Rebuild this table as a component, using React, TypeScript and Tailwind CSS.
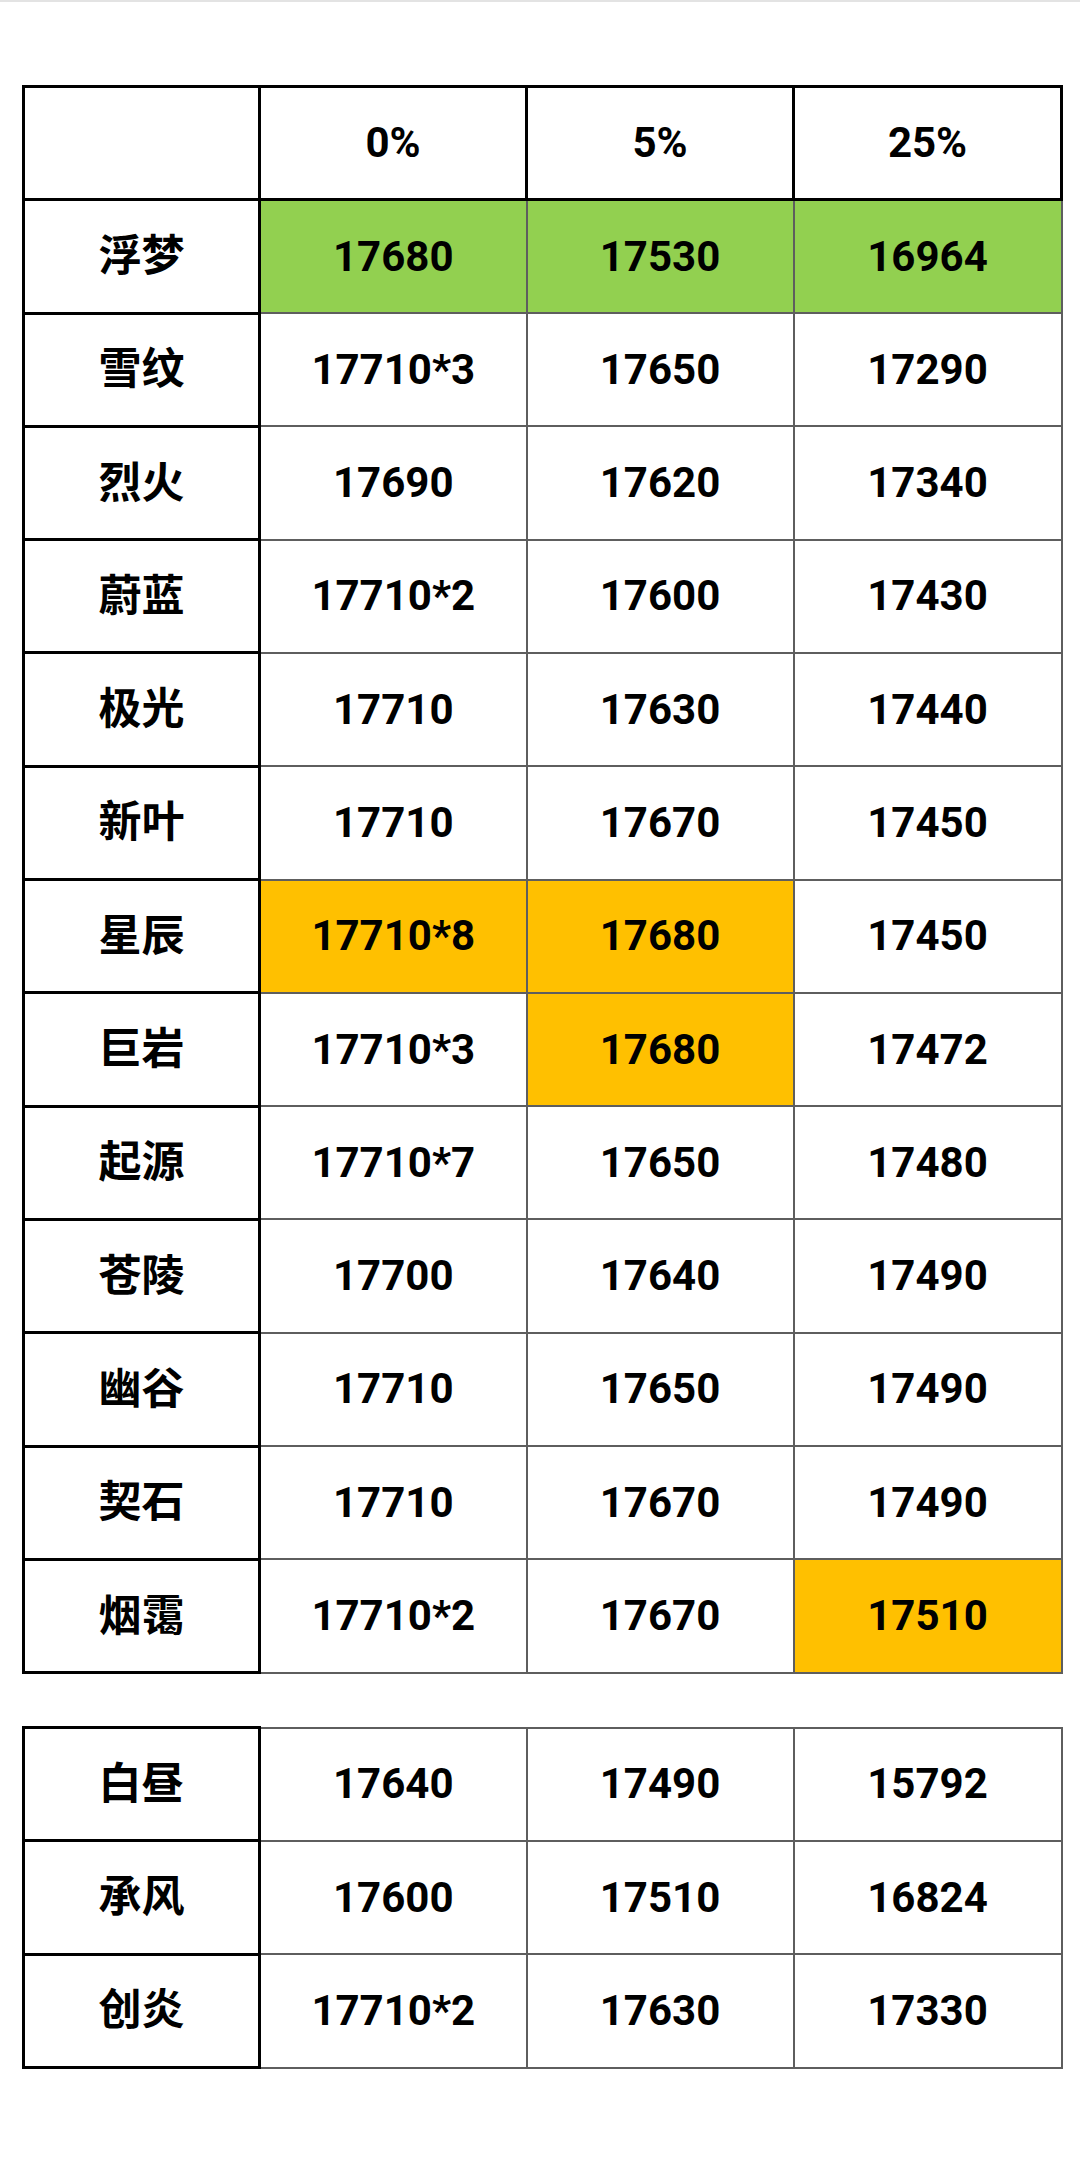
import React from 'react';

type Cell = { v: string; hl?: 'green' | 'orange' };
type Row = { name: string; cells: Cell[] };

const g = (v: string): Cell => ({ v, hl: 'green' });
const o = (v: string): Cell => ({ v, hl: 'orange' });
const n = (v: string): Cell => ({ v });

const mainRows: Row[] = [
  { name: '浮梦', cells: [g('17680'), g('17530'), g('16964')] },
  { name: '雪纹', cells: [n('17710*3'), n('17650'), n('17290')] },
  { name: '烈火', cells: [n('17690'), n('17620'), n('17340')] },
  { name: '蔚蓝', cells: [n('17710*2'), n('17600'), n('17430')] },
  { name: '极光', cells: [n('17710'), n('17630'), n('17440')] },
  { name: '新叶', cells: [n('17710'), n('17670'), n('17450')] },
  { name: '星辰', cells: [o('17710*8'), o('17680'), n('17450')] },
  { name: '巨岩', cells: [n('17710*3'), o('17680'), n('17472')] },
  { name: '起源', cells: [n('17710*7'), n('17650'), n('17480')] },
  { name: '苍陵', cells: [n('17700'), n('17640'), n('17490')] },
  { name: '幽谷', cells: [n('17710'), n('17650'), n('17490')] },
  { name: '契石', cells: [n('17710'), n('17670'), n('17490')] },
  { name: '烟霭', cells: [n('17710*2'), n('17670'), o('17510')] },
];

const extraRows: Row[] = [
  { name: '白昼', cells: [n('17640'), n('17490'), n('15792')] },
  { name: '承风', cells: [n('17600'), n('17510'), n('16824')] },
  { name: '创炎', cells: [n('17710*2'), n('17630'), n('17330')] },
];

const Cols = () => (
  <colgroup>
    <col className="w-[236px]" />
    <col className="w-[267px]" />
    <col className="w-[267px]" />
    <col className="w-[268px]" />
  </colgroup>
);

const nameCell = 'border-[3px] border-black text-center align-middle';
const dataCell = 'border-[2.5px] border-[#5e5e5e] text-center align-middle';

const Body = ({ rows }: { rows: Row[] }) => (
  <tbody>
    {rows.map((r) => (
      <tr key={r.name} className="h-[113.3px]">
        <td className={`${nameCell} text-[43px]`}>{r.name}</td>
        {r.cells.map((c, i) => (
          <td
            key={i}
            className={`${dataCell} ${c.hl === 'green' ? 'bg-[#92d050]' : c.hl === 'orange' ? 'bg-[#ffc000]' : 'bg-white'}`}
          >
            {c.v}
          </td>
        ))}
      </tr>
    ))}
  </tbody>
);

export default function App() {
  return (
    <div
      className="w-[1080px] h-[2160px] bg-white border-t-2 border-[#e3e3e3] pt-[83px] pl-[22px] text-black font-bold text-[42px] leading-none"
      style={{ fontFamily: 'Roboto, "Noto Sans CJK SC", sans-serif' }}
    >
      <table className="table-fixed border-collapse w-[1038px]">
        <Cols />
        <thead>
          <tr className="h-[113.3px]">
            <th className={nameCell}></th>
            <th className={nameCell}>0%</th>
            <th className={nameCell}>5%</th>
            <th className={nameCell}>25%</th>
          </tr>
        </thead>
        <Body rows={mainRows} />
      </table>

      <table className="table-fixed border-collapse w-[1038px] mt-[52px]">
        <Cols />
        <Body rows={extraRows} />
      </table>
    </div>
  );
}
